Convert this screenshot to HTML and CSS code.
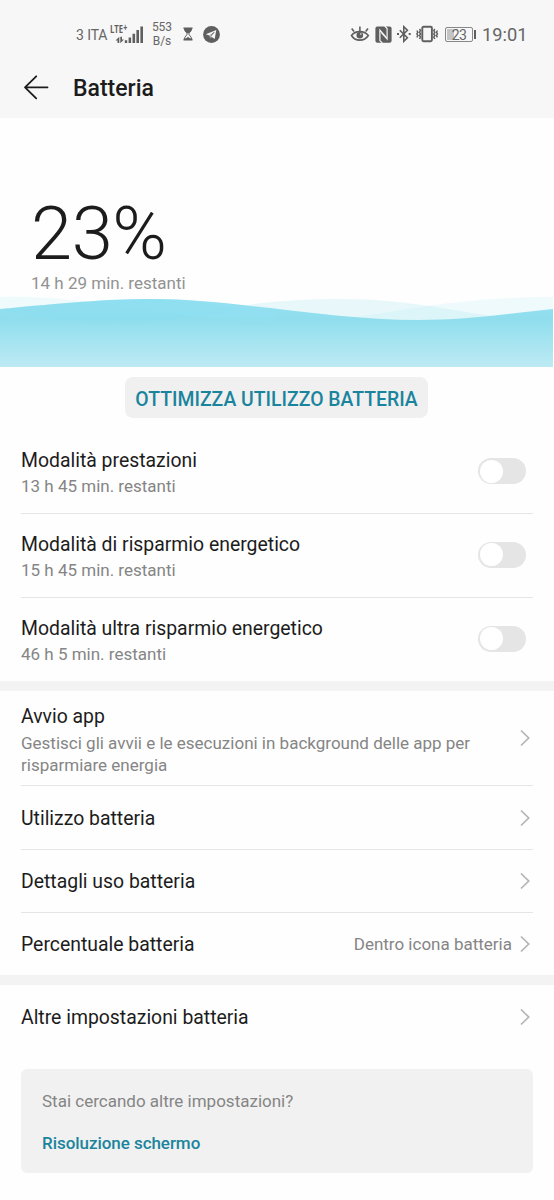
FILE: index.html
```html
<!DOCTYPE html>
<html lang="it">
<head>
<meta charset="utf-8">
<title>Batteria</title>
<link rel="stylesheet" href="styles.css">
</head>
<body>
<header class="top">
  <div class="status">
    <div class="status-left">
      <span class="carrier">3 ITA</span>
      <div class="network">
        <span class="lte">LTE<sup>+</sup></span>
        <svg class="signal" width="34" height="20" viewBox="0 0 34 20">
          <path d="M5.500 15.400 9.300 11.800V18H7.500V15.400zM10.300 11.800H12V14.600H14L10.300 18.200z" fill="#5f5f5f"/>
          <path d="M14.800 15.300h2.400V18h-2.400zM18.600 12.500h2.500V18h-2.500zM22.500 8.800h2.600V18h-2.600zM26.400 5H29v13h-2.600zM30.400 1.400h2.600V18h-2.600z" fill="#5f5f5f"/>
        </svg>
      </div>
      <div class="speed"><span>553</span><span>B/s</span></div>
      <svg class="hourglass" width="10" height="14" viewBox="0 0 10 14" fill="none" stroke="#5f5f5f">
        <path d="M.5 1.200h9M.5 12.600h9" stroke-width="1.600"/>
        <path d="M1.500 2c0 3 2.700 3.300 2.700 4.900S1.500 9 1.500 12h7c0-3-2.700-3.500-2.700-5.100S8.500 5 8.500 2" stroke-width="1"/>
        <path d="M1.500 2h7c0 2-1.200 3.200-2.200 4h-2.600c-1-.8-2.200-2-2.200-4zM2.500 12 5 9.800 7.500 12z" fill="#5f5f5f" stroke="none"/>
      </svg>
      <svg class="telegram" width="17" height="17" viewBox="0 0 17 17">
        <circle cx="8.500" cy="8.500" r="8.400" fill="#5f5f5f"/>
        <path d="M2.800 8.300 13.300 4.100 11.700 12.900 8.700 10.900 7.200 12.400 6.500 9.600z" fill="#f7f7f7"/>
        <path d="M6.700 9.700 11.200 6.200 7.900 10.200 7.200 12.200" fill="none" stroke="#5f5f5f" stroke-width=".7"/>
      </svg>
    </div>
    <div class="status-right">
      <svg width="20" height="18" viewBox="0 0 20 18" fill="none" stroke="#5f5f5f" stroke-width="1.600">
        <path d="M1.500 10.500C5 5.300 14.500 5.300 18.300 10.500 14.500 16.700 5 16.700 1.500 10.500z"/>
        <path d="M4 6.600 1.700 3.600M9.900 6V1.500M15.700 6.600 18 3.600"/>
        <circle cx="9.800" cy="10.300" r="3.300" fill="#5f5f5f" stroke="none"/>
        <circle cx="10.800" cy="9" r=".8" fill="#f7f7f7" stroke="none"/>
      </svg>
      <svg class="nfc" width="17" height="17" viewBox="0 0 17 17">
        <rect x=".4" y=".4" width="16.200" height="16.300" rx="2" fill="#5f5f5f"/>
        <path d="M7.300 17 4.900 14.600V4.200L10.600 10.600M9.700 0 12.100 2.500V12.900L6.400 6.500" fill="none" stroke="#f7f7f7" stroke-width="1.200"/>
      </svg>
      <svg class="bluetooth" width="14" height="18" viewBox="0 0 14 18">
        <path d="M2.800 5.200 10.400 12.800 6.800 16.300V1.700L10.400 5.200 2.800 12.800" fill="none" stroke="#5f5f5f" stroke-width="1.600"/>
        <path d="M0 8h2v2H0zM11.700 8h2v2h-2z" fill="#5f5f5f"/>
      </svg>
      <svg class="vibrate" width="23" height="18" viewBox="0 0 23 18" fill="none" stroke="#5f5f5f">
        <rect x="6.300" y="1.700" width="9.600" height="14.600" rx="1.200" stroke-width="1.900"/>
        <path d="M3.500 4 4.500 5.600 3.500 7.200 4.500 8.900 3.500 10.500 4.500 12.200 3.500 14M.9 5.500 1.800 7.200.9 8.900 1.800 10.500.9 12.300M18.800 4 17.800 5.600 18.800 7.200 17.800 8.900 18.800 10.500 17.800 12.200 18.800 14M21.400 5.500 20.500 7.200 21.400 8.900 20.500 10.500 21.400 12.300" stroke-width="1.500"/>
      </svg>
      <div class="battery"><span class="battery-body">23</span><span class="battery-tip"></span></div>
      <span class="clock">19:01</span>
    </div>
  </div>
  <div class="titlebar">
    <svg width="26" height="26" viewBox="0 0 26 26" fill="none" stroke="#1c1c1c" stroke-width="1.800" stroke-linecap="round" stroke-linejoin="round">
      <path d="M24.500 12.300H2M13.200 1.300 2 12.300 13.200 23.300"/>
    </svg>
    <h1>Batteria</h1>
  </div>
</header>

<section class="hero">
  <div class="level">23%</div>
  <div class="remaining">14 h 29 min. restanti</div>
  <svg class="waves" width="553" height="72" viewBox="0 0 553 72">
    <defs>
      <linearGradient id="water" x1="0" y1="0" x2="0" y2="1">
        <stop offset="0" stop-color="#94e0f1"/>
        <stop offset=".3" stop-color="#90deed"/>
        <stop offset="1" stop-color="#bdeaf4"/>
      </linearGradient>
    </defs>
    <path d="M0 2C45 1 80 5 130 14 190 25 240 34 320 26 400 18 450 2 553 2V40H0z" fill="#a8e8f0" opacity=".18"/>
    <path d="M200 18C250 8 290 4 340 4 430 4 470 24 553 26V40H200z" fill="#a8e8f0" opacity=".25"/>
    <path d="M0 14C65 8 105 4 152 4 235 4 330 25 418 25 465 25 505 19 553 14V72H0z" fill="url(#water)"/>
    <path d="M0 15C55 29 160 34 238 14 222 11 190 4 152 4 105 4 65 8 0 14z" fill="#84def2" opacity=".3"/>
    <path d="M95 7C160 15 200 27 277 27L277 17C235 9 165 -1 95 7z" fill="#91e2f4" opacity=".3"/>
  </svg>
</section>

<div class="action"><button class="optimize">OTTIMIZZA UTILIZZO BATTERIA</button></div>

<main>
  <section class="group modes">
    <div class="row mode"><div><h2>Modalità prestazioni</h2><p>13 h 45 min. restanti</p></div><span class="switch"></span></div>
    <div class="row mode"><div><h2>Modalità di risparmio energetico</h2><p>15 h 45 min. restanti</p></div><span class="switch"></span></div>
    <div class="row mode"><div><h2>Modalità ultra risparmio energetico</h2><p>46 h 5 min. restanti</p></div><span class="switch"></span></div>
  </section>
  <section class="group links">
    <div class="row launch"><div><h2>Avvio app</h2><p>Gestisci gli avvii e le esecuzioni in background delle app per<br>risparmiare energia</p></div><svg class="chevron" viewBox="0 0 10 18"><path d="M1 1.500 8.700 9 1 16.500"/></svg></div>
    <div class="row usage"><h2>Utilizzo batteria</h2><svg class="chevron" viewBox="0 0 10 18"><path d="M1 1.500 8.700 9 1 16.500"/></svg></div>
    <div class="row"><h2>Dettagli uso batteria</h2><svg class="chevron" viewBox="0 0 10 18"><path d="M1 1.500 8.700 9 1 16.500"/></svg></div>
    <div class="row"><h2>Percentuale batteria</h2><span class="value">Dentro icona batteria</span><svg class="chevron" viewBox="0 0 10 18"><path d="M1 1.500 8.700 9 1 16.500"/></svg></div>
  </section>
  <section class="group more">
    <div class="row"><h2>Altre impostazioni batteria</h2><svg class="chevron" viewBox="0 0 10 18"><path d="M1 1.500 8.700 9 1 16.500"/></svg></div>
  </section>
  <aside class="suggest">
    <p>Stai cercando altre impostazioni?</p>
    <a>Risoluzione schermo</a>
  </aside>
</main>
</body>
</html>
```
FILE: styles.css
```css
* { box-sizing: border-box; }
body {
  margin: 0;
  height: 1200px;
  overflow: hidden;
  background: #fefefe;
  color: #1c1c1c;
  font-family: Roboto, "Liberation Sans", sans-serif;
}
h1, h2, p { margin: 0; font-weight: 400; }
svg { display: block; flex: none; }

.top { height: 118px; background: #f7f7f7; }
.status {
  display: flex;
  justify-content: space-between;
  height: 58px;
  padding: 10px 27px 0 76px;
  color: #666;
}
.status-left, .status-right { display: flex; align-items: center; height: 48px; white-space: nowrap; }
.carrier { width: 34px; padding-top: 1px; font-size: 14px; letter-spacing: -.1px; }
.network { display: grid; width: 34px; height: 22px; }
.network > * { grid-area: 1 / 1; }
.lte {
  width: 26px;
  font: 700 11px/11px "Open Sans", sans-serif;
  color: #5f5f5f;
  transform: scaleX(.7);
  transform-origin: 0 0;
}
.lte sup { font-size: 10px; line-height: 0; vertical-align: 2px; }
.signal { margin-top: 2px; }
.speed { display: flex; flex-direction: column; width: 22px; margin-left: 7px; font-size: 12px; line-height: 14px; text-align: center; }
.hourglass { margin-left: 10px; }
.telegram { margin-left: 10px; }
.nfc { margin-left: 5px; }
.bluetooth { margin-left: 5px; }
.vibrate { margin-left: 5px; }
.battery { display: flex; align-items: center; gap: 1px; margin-left: 6px; }
.battery-body {
  width: 28px;
  height: 15px;
  border: 1px solid #888;
  border-radius: 2px;
  background: linear-gradient(90deg, #c4c4c4 8px, transparent 8px);
  font-size: 14px;
  line-height: 14px;
  letter-spacing: -.5px;
  text-align: center;
  box-shadow: inset 0 0 0 1px #f7f7f7;
}
.battery-tip { width: 2px; height: 9px; background: #5f5f5f; }
.clock { width: 45px; margin-left: 6px; padding-top: 1px; font-size: 18.3px; }
.titlebar { display: flex; align-items: center; height: 59px; padding-left: 23px; gap: 24px; }
.titlebar h1 { font-size: 23px; font-weight: 500; line-height: 30px; margin-top: 2px; }

.hero { display: flex; flex-direction: column; height: 249px; padding-top: 77px; }
.level { height: 78px; padding-left: 31px; font-size: 74px; font-weight: 300; line-height: 78px; letter-spacing: -.4px; }
.remaining { height: 22px; padding-left: 31px; font-size: 17px; line-height: 20px; color: #929292; }
.waves { margin-top: auto; }

.action { display: flex; justify-content: center; height: 62px; padding: 10px 1px 11px 0; }
.optimize {
  width: 303px;
  padding: 4px 0 0;
  border: 0;
  border-radius: 8px;
  background: #f0f0f0;
  color: #1b849d;
  font: 500 19.4px/24px Roboto, sans-serif;
}

.group { border-bottom: 10px solid #f3f3f3; padding: 0 21px; }
.row { display: flex; align-items: center; height: 63px; }
.row + .row { border-top: 1px solid #e5e5e5; }
h2 { padding-top: 1px; font-size: 19.4px; line-height: 24px; white-space: nowrap; }
.row p { font-size: 17px; line-height: 22px; color: #858585; white-space: nowrap; }
.mode { height: 84px; }
.mode > div { flex: 1; padding-top: 3px; }
.mode + .mode > div { padding-top: 2px; }
.mode p { margin-top: 2px; }
.switch { width: 48px; height: 26px; margin-right: 7px; border-radius: 13px; background: #e5e5e5; }
.mode + .mode .switch { margin-top: -2px; }
.switch::before { content: ""; display: block; width: 23px; height: 23px; margin: 1.5px; border-radius: 50%; background: #fff; }
.launch { height: 94px; padding-top: 4px; }
.launch .chevron { margin-top: -5px; }
.launch p { margin-top: 3px; }
.usage { height: 64px; }
.usage h2, .more h2 { padding-top: 3px; }
.chevron { width: 10px; height: 18px; margin-left: auto; margin-right: 3px; fill: none; stroke: #b4b4b4; stroke-width: 1.700; }
.value { margin-left: auto; font-size: 17px; color: #858585; }
.value + .chevron { margin-left: 8px; }
.more { border: 0; }

.suggest {
  height: 104px;
  margin: 21px 21px 0;
  padding: 21px;
  border-radius: 6px;
  background: #f1f1f1;
  font-size: 17px;
  line-height: 22px;
  color: #858585;
}
.suggest a { display: block; margin-top: 20px; color: #1b849d; font-weight: 500; letter-spacing: -.05px; }
```
